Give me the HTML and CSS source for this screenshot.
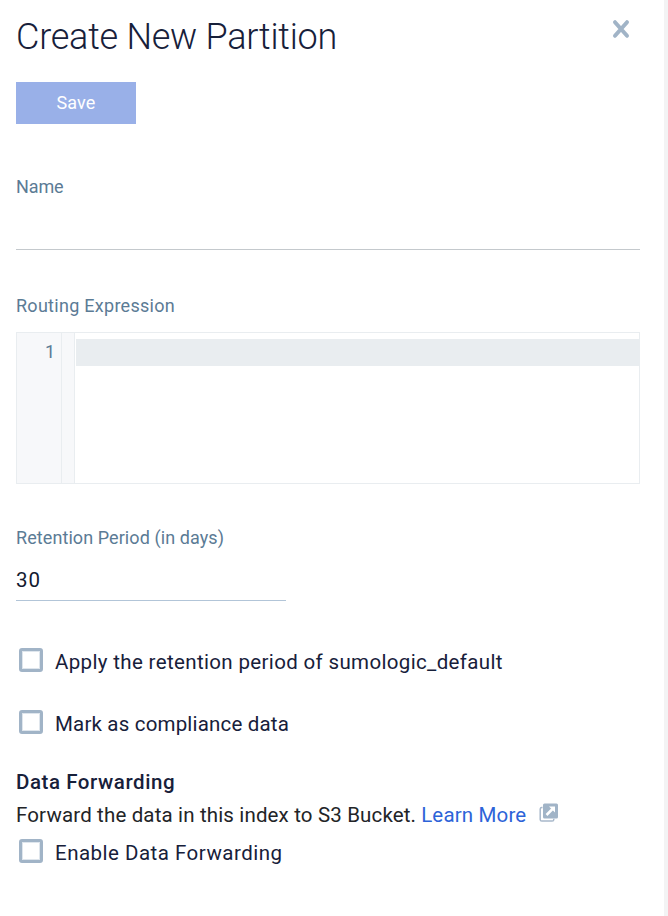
FILE: index.html
```html
<!DOCTYPE html>
<html lang="en">
<head>
<meta charset="utf-8">
<title>Create New Partition</title>
<link rel="stylesheet" href="styles.css">
</head>
<body>
<main class="panel">
  <header class="header">
    <h1 class="title">Create New Partition</h1>
    <button class="close" aria-label="Close">
      <svg width="18" height="20" viewBox="0 0 18 20"><path d="M3 3.2 15 16.8M15 3.2 3 16.8"/></svg>
    </button>
  </header>
  <button class="save"><span class="save-text">Save</span></button>
  <section class="field name-field">
    <label class="label"><span class="label-name">Name</span></label>
    <div class="input"></div>
  </section>
  <section class="field routing-field">
    <label class="label"><span class="label-routing">Routing Expression</span></label>
    <div class="editor">
      <div class="line-numbers">1</div>
      <div class="fold-gutter"></div>
      <div class="code"><div class="active-line"></div></div>
    </div>
  </section>
  <section class="field retention-field">
    <label class="label"><span class="label-retention">Retention Period (in days)</span></label>
    <div class="input days">30</div>
  </section>
  <label class="check"><span class="box"></span><span class="text-apply">Apply the retention period of sumologic_default</span></label>
  <label class="check compliance"><span class="box"></span><span class="text-mark">Mark as compliance data</span></label>
  <h2 class="subtitle"><span class="subtitle-text">Data Forwarding</span></h2>
  <p class="description"><span class="text-forward">Forward the data in this index to S3 Bucket.</span>
    <a class="link"><span class="link-text">Learn More</span><svg class="external" width="20" height="20" viewBox="0 0 20 20"><path class="back" d="M3.5 4.5H2.8A1.6 1.6 0 0 0 1.2 6v10.4A1.6 1.6 0 0 0 2.8 18h10.4a1.6 1.6 0 0 0 1.6-1.6v-.7"/><rect class="front" x="4" y="0.5" width="15" height="15" rx="1.5"/><path class="arrow" d="m7.5 12 6-6"/><path class="tip" d="M10 3.5h6v6z"/></svg></a>
  </p>
  <label class="check enable"><span class="box"></span><span class="text-enable">Enable Data Forwarding</span></label>
</main>
</body>
</html>
```
FILE: styles.css
```css
* { box-sizing: border-box; }
body { margin: 0; background: #fff; font-family: Roboto, "Liberation Sans", sans-serif; color: #17203a; }
button { border: 0; padding: 0; background: none; font: inherit; }
.panel { height: 916px; padding: 16px 24px 0 16px; border-right: 4px solid #f3f3f4; display: flex; flex-direction: column; }
.header { display: flex; justify-content: space-between; height: 66px; }
.title { margin: 0; font-size: 36px; font-weight: 300; line-height: 42px; white-space: nowrap; letter-spacing: -0.24px; }
.close { width: 18px; height: 20px; margin: 3px 10px 0 0; }
.close svg { display: block; }
.close path { stroke: #a1b4c7; stroke-width: 4; stroke-linecap: round; }
.save { width: 120px; height: 42px; background: #99b0e8; color: #fff; font-size: 18px; line-height: 42px; letter-spacing: 0.1px; }
.label { display: block; height: 24px; line-height: 24px; font-size: 18px; color: #5b7b95; }
.label-name { letter-spacing: -0.1px; }
.label-routing { letter-spacing: 0.28px; }
.label-retention { letter-spacing: 0.08px; }
.name-field { margin-top: 51px; }
.input { height: 51px; border-bottom: 1px solid #c4c9cd; }
.routing-field { margin-top: 44px; }
.editor { display: flex; height: 152px; margin-top: 14px; border: 1px solid #e9edf0; }
.line-numbers { width: 44px; padding: 5px 6px 0 0; line-height: 27px; font-size: 18px; text-align: right; color: #5b7b95; background: #f7f8fa; }
.fold-gutter { width: 14px; background: #f7f8fa; border: solid #e9edf0; border-width: 0 1px; }
.code { flex: 1; padding: 6px 0 0 1px; }
.active-line { height: 27px; background: #e9edf0; }
.retention-field { margin-top: 42px; }
.days { width: 270px; padding-top: 18px; line-height: 24px; font-size: 20.5px; letter-spacing: 1px; border-color: #b2c5d8; color: #121a30; }
.check { display: flex; align-items: flex-start; margin: 47px 0 0 3px; height: 24px; gap: 12px; font-size: 20.5px; line-height: 28px; white-space: nowrap; }
.box { flex: none; width: 24px; height: 24px; border: 3px solid #a1b4c7; border-radius: 3px; box-shadow: inset 0 0 0 1px #dfe6ed; }
.text-apply { letter-spacing: 0.35px; }
.text-mark { letter-spacing: 0.18px; }
.text-enable { letter-spacing: 0.49px; }
.compliance { margin-top: 38px; }
.subtitle { margin: 34px 0 0; font-size: 20.5px; line-height: 28px; font-weight: 500; letter-spacing: 0.56px; }
.description { display: flex; align-items: center; margin: 4px 0 0; height: 30px; font-size: 20.5px; color: #222427; white-space: nowrap; gap: 5px; letter-spacing: 0.15px; }
.link { display: flex; align-items: center; color: #2d63d8; }
.external { margin: -4px 0 0 13px; }
.back { fill: none; stroke: #a8b8ca; stroke-width: 1.5; }
.front { fill: #a1b4c7; }
.arrow { stroke: #fff; stroke-width: 2.5; }
.tip { fill: #fff; }
.enable { margin-top: 9px; }
```
